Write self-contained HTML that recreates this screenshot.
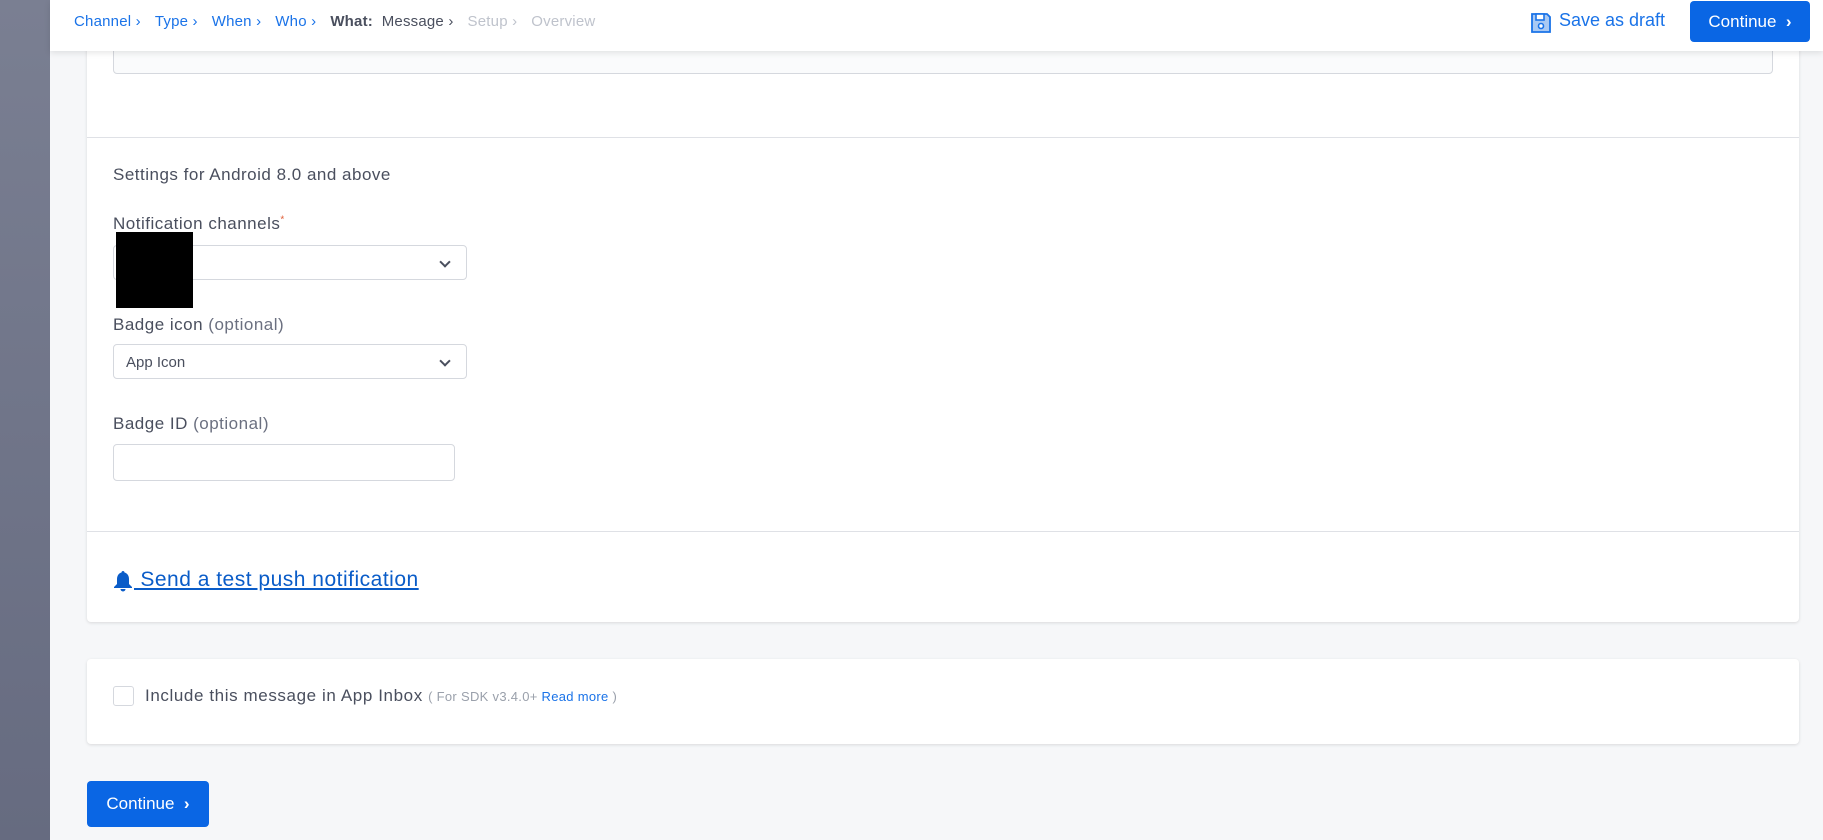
<!DOCTYPE html>
<html><head><meta charset="utf-8"><style>
*{box-sizing:border-box;margin:0;padding:0}
body{width:1823px;height:840px;overflow:hidden;background:#f6f7f9;font-family:"Liberation Sans",sans-serif;position:relative;color:#4a4f5e}
.side{position:absolute;left:0;top:0;width:50px;height:840px;background:linear-gradient(#7a7f92,#666b80)}
.hdr{position:absolute;left:50px;top:0;width:1773px;height:51px;background:#fff;box-shadow:0 2px 6px rgba(0,0,0,.1);z-index:5}
.bc{position:absolute;left:24px;top:13px;font-size:15px;white-space:nowrap;letter-spacing:.2px}
.bc span{margin-right:14px}
.b{color:#1a73e8}.g{color:#bfc3cc}.d{color:#4a4f5e}
.btn{position:absolute;background:#0a66e4;color:#fff;border-radius:4px;font-size:17px;display:flex;align-items:center;justify-content:center}
.card{position:absolute;left:87px;width:1712px;background:#fff;border-radius:4px;box-shadow:0 1px 3px rgba(0,0,0,.12)}
.lbl{position:absolute;left:113px;font-size:17px;letter-spacing:.5px;color:#4a4f5e}
.lbl i{font-style:normal;color:#6b7080}
.box{position:absolute;left:113px;border:1px solid #d5d8de;border-radius:4px;background:#fff}
.chev{position:absolute;right:17px;top:12px;width:8px;height:8px;border-right:2px solid #4a4f5e;border-bottom:2px solid #4a4f5e;transform:rotate(45deg)}
.hr{position:absolute;left:87px;width:1712px;height:1px;background:#dfe1e6}
</style></head><body>
<div class="side"></div>
<div class="hdr">
<div class="bc"><span class="b">Channel ›</span><span class="b">Type ›</span><span class="b">When ›</span><span class="b">Who ›</span><span class="d"><b>What:</b>&nbsp; Message ›</span><span class="g">Setup ›</span><span class="g">Overview</span></div>
<svg style="position:absolute;left:1479px;top:11px" width="24" height="24" viewBox="0 0 24 24"><path d="M3 3h15l3 3v15H3z" fill="#a9c9f3" stroke="#1a73e8" stroke-width="1.8"/><rect x="7" y="3" width="8" height="6" fill="#fff" stroke="#1a73e8" stroke-width="1.6"/><circle cx="12" cy="15" r="2.5" fill="#fff" stroke="#1a73e8" stroke-width="1.6"/></svg>
<div style="position:absolute;left:1509px;top:10px;font-size:18px;color:#1a73e8">Save as draft</div>
<div class="btn" style="left:1640px;top:1px;width:120px;height:41px">Continue &nbsp;<b>›</b></div>
</div>
<div class="card" style="top:0;height:622px"></div>
<div class="box" style="left:113px;top:40px;width:1660px;height:34px;background:#fafbfc"></div>
<div class="hr" style="top:137px"></div>
<div class="lbl" style="top:165px">Settings for Android 8.0 and above</div>
<div class="lbl" style="top:214px">Notification channels<sup style="color:#e0603a;font-size:10px">*</sup></div>
<div class="box" style="top:245px;width:354px;height:35px"><div class="chev"></div></div>
<div style="position:absolute;left:116px;top:232px;width:77px;height:76px;background:#000"></div>
<div class="lbl" style="top:315px">Badge icon <i>(optional)</i></div>
<div class="box" style="top:344px;width:354px;height:35px;font-size:15px;padding:9px 0 0 12px">App Icon<div class="chev"></div></div>
<div class="lbl" style="top:414px">Badge ID <i>(optional)</i></div>
<div class="box" style="top:444px;width:342px;height:37px"></div>
<div class="hr" style="top:531px"></div>
<svg style="position:absolute;left:113px;top:570px" width="20" height="22" viewBox="0 0 20 22"><path d="M10 1c1 0 1.5.7 1.5 1.5C14.5 3.3 16 6 16 9v5l3 3v1H1v-1l3-3V9c0-3 1.5-5.7 4.5-6.5C8.5 1.7 9 1 10 1zM7.5 19h5a2.5 2.5 0 0 1-5 0z" fill="#0a5cc8"/></svg>
<div style="position:absolute;left:134px;top:568px;font-size:21px;letter-spacing:.5px;color:#0a5cc8;text-decoration:underline">&nbsp;Send a test push notification</div>
<div class="card" style="top:659px;height:85px"></div>
<div style="position:absolute;left:113px;top:686px;width:21px;height:20px;border:1px solid #d5d8de;border-radius:3px;background:#fff"></div>
<div style="position:absolute;left:145px;top:686px;font-size:17px;letter-spacing:.6px;color:#4a4f5e;white-space:nowrap">Include this message in App Inbox <span style="font-size:13px;letter-spacing:.3px;color:#9aa0ab">( For SDK v3.4.0+ <span style="color:#1a73e8">Read more</span> )</span></div>
<div class="btn" style="left:87px;top:781px;width:122px;height:46px">Continue &nbsp;<b>›</b></div>
</body></html>
